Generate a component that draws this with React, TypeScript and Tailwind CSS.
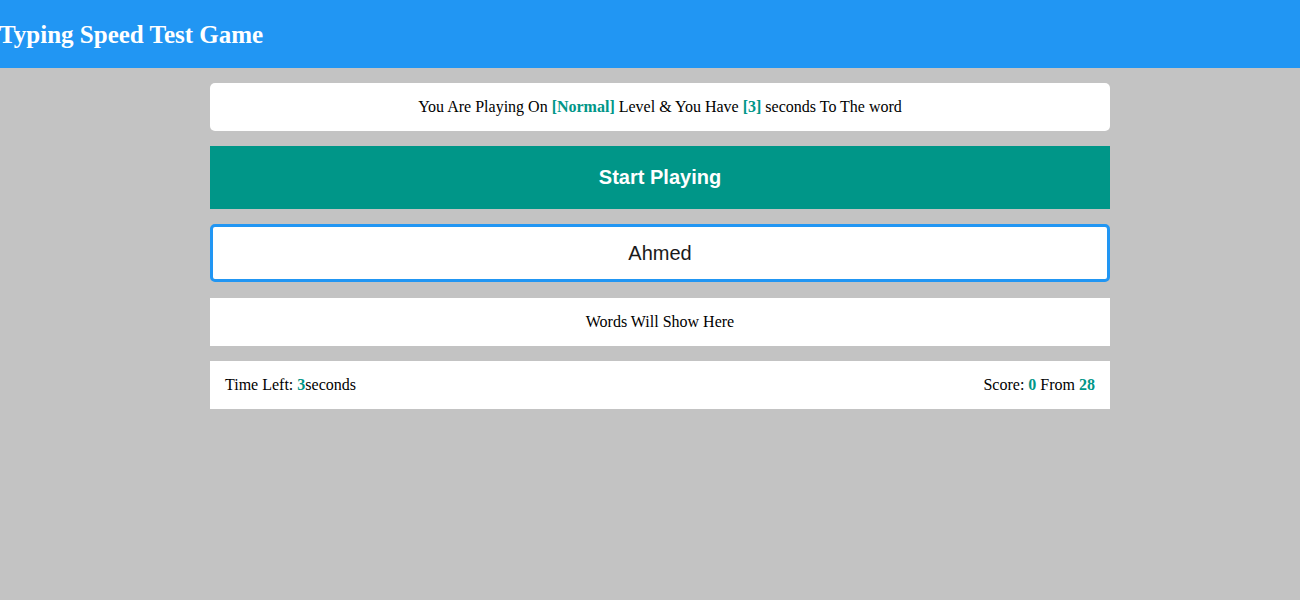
import React from 'react';

const serif = { fontFamily: '"Liberation Serif", "Times New Roman", serif' };

export default function App() {
  return (
    <div className="min-h-screen bg-[#c3c3c3]" style={serif}>
      <div className="h-[68px] bg-[#2196f3] flex items-center">
        <h1 className="-ml-[1px] text-white text-[25px] font-bold leading-none">Typing Speed Test Game</h1>
      </div>
      <div className="w-[900px] ml-[210px] mt-[15px] flex flex-col">
        <div className="h-[48px] bg-white rounded-[5px] flex items-center justify-center text-[16px] text-black">
          <span>
            You Are Playing On <span className="text-[#009688] font-bold">[Normal]</span> Level &amp; You Have{' '}
            <span className="text-[#009688] font-bold">[3]</span> seconds To The word
          </span>
        </div>
        <button className="mt-[15px] h-[63px] bg-[#009688] text-white text-[20px] font-bold font-['Liberation_Sans',Arial,sans-serif] pb-[1px]">
          Start Playing
        </button>
        <input
          defaultValue="Ahmed"
          className="mt-[15px] h-[58px] bg-white rounded-[5px] border-[3px] border-[#2196f3] outline-none text-center text-[20px] text-[#1a1a1a] font-['Liberation_Sans',Arial,sans-serif]"
        />
        <div className="mt-[16px] h-[48px] bg-white flex items-center justify-center text-[16px] text-black">
          Words Will Show Here
        </div>
        <div className="mt-[15px] h-[48px] bg-white flex items-center justify-between px-[15px] text-[16px] text-black">
          <span>
            Time Left: <span className="text-[#009688] font-bold">3</span>seconds
          </span>
          <span>
            Score: <span className="text-[#009688] font-bold">0</span> From{' '}
            <span className="text-[#009688] font-bold">28</span>
          </span>
        </div>
      </div>
    </div>
  );
}
